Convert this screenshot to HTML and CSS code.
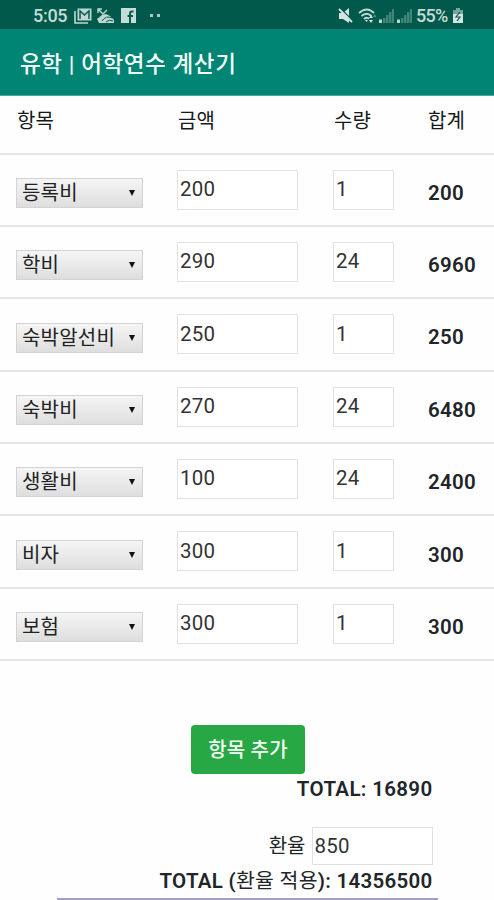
FILE: index.html
```html
<!DOCTYPE html>
<html lang="ko">
<head>
<meta charset="utf-8">
<title>유학 | 어학연수 계산기</title>
<link rel="stylesheet" href="styles.css">
</head>
<body>
<div class="status">
  <span class="clock">5:05</span>
  <svg class="mail" width="18" height="16" viewBox="0 0 18 16"><path d="M1 3v12h13" fill="none" stroke="#bdd8d2" stroke-width="1.6"/><path d="M3.500 .5h14v12h-14z" fill="#bdd8d2"/><path d="M6 11V3l4.500 4L15 3v8" fill="none" stroke="#0a5b4d" stroke-width="1.500"/></svg>
  <svg class="missed" width="18" height="16" viewBox="0 0 18 16"><path d="M1 1l5 5 4-4M1 5V1h4" fill="none" stroke="#bdd8d2" stroke-width="1.400"/><path d="M0 11l5-4 4-1 4 2 4 4v3H2z" fill="#bdd8d2"/><path d="M5 13q4-6 10-3M9 14q3-3 7-1" fill="none" stroke="#0a5b4d"/></svg>
  <svg class="fb" width="15" height="15" viewBox="0 0 15 15"><path d="M0 0h15v15H0z" fill="#c5ddd8"/><path d="M12.500 3.500H11q-2 0-2 2V15M6.500 8h5.500" fill="none" stroke="#0a5b4d" stroke-width="2"/></svg>
  <svg class="dots" width="12" height="4" viewBox="0 0 12 4"><path d="M1 0h3v3H1zM8 0h3v3H8z" fill="#a9cbc4"/></svg>
  <svg class="mute" width="15" height="16" viewBox="0 0 15 16"><path d="M1 5h4l6-5v15L5 11H1z" fill="#d5e5e2"/><path d="M2 0l13 13" stroke="#00594a" stroke-width="1.500"/><path d="M1 1l13 13" stroke="#d5e5e2" stroke-width="1.800"/></svg>
  <svg class="wifi" width="19" height="16" viewBox="0 0 19 16"><path d="M1 5q8-7 15 0M3.500 8q5-4.500 10 0M6 11q3-2.500 5 0" fill="none" stroke="#bdd8d2" stroke-width="1.900"/><path d="M7 12h3l-1.500 2zM11 10l2-3 2 3zM11 12h4l-2 3z" fill="#d5e5e2"/><path d="M15 9l2-3 1 3z" fill="#5b958a"/></svg>
  <svg class="signal" width="15" height="15" viewBox="0 0 15 15"><path d="M4 15v-5h2.500v5zM7 15V7h2.500v8zM10 15V4h2.500v11zM13 15V1h2v14z" fill="#3f8578"/><path d="M0 11.500h3V15H0z" fill="#bdd8d2"/></svg>
  <svg class="signal" width="15" height="15" viewBox="0 0 15 15"><path d="M4 15v-5h2.500v5zM7 15V7h2.500v8zM10 15V4h2.500v11zM13 15V1h2v14z" fill="#3f8578"/><path d="M0 11.500h3V15H0z" fill="#bdd8d2"/></svg>
  <span class="percent">55%</span>
  <svg class="battery" width="10" height="15" viewBox="0 0 10 15"><path d="M3 0h4v2h3v13H0V2h3z" fill="#75a69d"/><path d="M0 6h10v9H0z" fill="#d5e5e2"/><path d="M7 4L3 9h4l-3 4" fill="none" stroke="#0a5b4d" stroke-width="1.200"/></svg>
</div>
<header class="appbar"><h1>유학 | 어학연수 계산기</h1></header>
<main>
  <div class="row head"><span>항목</span><span>금액</span><span>수량</span><span>합계</span></div>
  <div class="row"><div class="select">등록비</div><input value="200"><input value="1"><b>200</b></div>
  <div class="row"><div class="select">학비</div><input value="290"><input value="24"><b>6960</b></div>
  <div class="row"><div class="select">숙박알선비</div><input value="250"><input value="1"><b>250</b></div>
  <div class="row"><div class="select">숙박비</div><input value="270"><input value="24"><b>6480</b></div>
  <div class="row"><div class="select">생활비</div><input value="100"><input value="24"><b>2400</b></div>
  <div class="row"><div class="select">비자</div><input value="300"><input value="1"><b>300</b></div>
  <div class="row"><div class="select">보험</div><input value="300"><input value="1"><b>300</b></div>
  <button class="add">항목 추가</button>
  <section class="totals">
    <div class="total">TOTAL: 16890</div>
    <label class="rate">환율 <input value="850"></label>
    <div class="total applied">TOTAL (<span>환율 적용</span>): 14356500</div>
  </section>
  <div class="bottom"></div>
</main>
</body>
</html>
```
FILE: styles.css
```css
* { box-sizing: border-box; }
body {
  margin: 0;
  height: 900px;
  overflow: hidden;
  background: #fefefe;
  color: #212529;
  font: 20px/30px Roboto, "Noto Sans CJK KR", sans-serif;
  white-space: nowrap;
}
.status {
  display: flex;
  align-items: center;
  height: 29px;
  padding: 2px 31px 0 33px;
  background: #00594a;
  color: #c5ddd8;
  font-size: 18px;
  font-weight: 500;
}
.status svg { flex: none; }
.clock { width: 41px; letter-spacing: -.3px; }
.missed { margin-left: 5px; }
.fb { margin-left: 6px; }
.dots { margin-left: 13px; }
.mute { margin-left: auto; }
.wifi { margin-left: 5px; }
.signal { margin-left: 3px; }
.wifi + .signal { margin-left: 2px; }
.percent { width: 33px; margin: 0 4px 0 4px; letter-spacing: -.7px; }
.appbar {
  height: 67px;
  padding: 19px 20px 0;
  background: #008575;
  border-bottom: 1px solid #4da79b;
}
h1 {
  margin: 0;
  color: #f2faf8;
  font-size: 22.5px;
  font-weight: 500;
  line-height: 32px;
  letter-spacing: .6px;
}
.row {
  display: grid;
  grid-template-columns: 161px 156px 95px 1fr;
  height: 72.35px;
  padding: 15px 0 0 16px;
  border-bottom: 2px solid #e3e5e7;
}
.head {
  height: 58.5px;
  padding-top: 10px;
  color: #16181a;
}
.head span { padding-left: 1px; }
.head span:last-child { padding-left: 0; }
input {
  width: 121px;
  height: 40px;
  padding: 0 2px 1px;
  border: 1px solid #dfe1e3;
  background: #fff;
  color: #333;
  font: 20.5px Roboto, sans-serif;
  letter-spacing: .2px;
  outline: none;
}
.row input:nth-child(3) { width: 61px; }
b {
  padding-top: 8.3px;
  font-size: 20.5px;
  font-weight: 600;
  letter-spacing: .3px;
}
.select {
  display: flex;
  justify-content: space-between;
  align-items: center;
  width: 127px;
  height: 30px;
  margin-top: 8.5px;
  padding: 0 7px 0 5px;
  border: 1px solid #d3d3d3;
  background: linear-gradient(#f5f5f5, #dedede);
  color: #222;
  letter-spacing: .2px;
}
.select::after {
  content: "";
  border: 3.5px solid transparent;
  border-top: 6px solid #111;
  border-bottom: 0;
}
.add {
  display: block;
  width: 114px;
  height: 49px;
  margin: 64.5px 0 0 191px;
  padding: 0 0 2px;
  border: 0;
  border-radius: 4px;
  background: #28a745;
  color: #f4fff6;
  font: 500 20px Roboto, "Noto Sans CJK KR", sans-serif;
  letter-spacing: .2px;
}
.totals {
  display: flex;
  flex-direction: column;
  align-items: flex-end;
  padding-right: 61.500px;
}
.total { font-size: 20.5px; font-weight: 600; letter-spacing: .35px; }
.applied { padding-top: 1px; letter-spacing: .28px; }
.total span { font-weight: 400; }
.rate {
  display: flex;
  align-items: center;
  gap: 6px;
  margin-top: 23px;
}
.rate input { height: 38px; }
.bottom {
  width: 381px;
  height: 2px;
  margin: 2px 0 0 57px;
  background: #a49bce;
}
```
